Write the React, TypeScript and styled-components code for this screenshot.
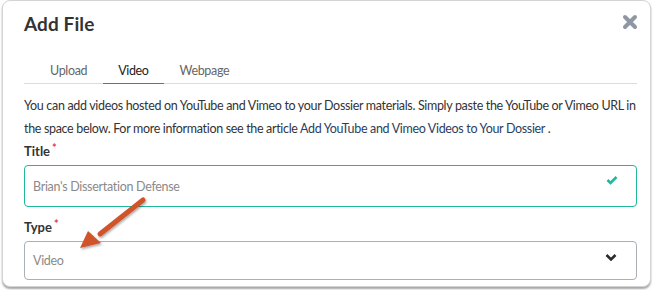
import React from 'react'
import styled, { createGlobalStyle } from 'styled-components'

const GlobalStyle = createGlobalStyle`
  html, body {
    margin: 0;
    padding: 0;
    background: #ffffff;
  }
  body {
    font-family: Lato, 'Open Sans', sans-serif;
    color: #333;
  }
`

const Page = styled.div`
  position: relative;
  width: 653px;
  height: 290px;
  padding: 0 2px 0 2px;
  box-sizing: border-box;
`

const Modal = styled.div`
  box-sizing: border-box;
  width: 649px;
  height: 287px;
  border: 1px solid #d4d4d4;
  border-radius: 8px;
  box-shadow: 0 2px 2px rgba(0, 0, 0, 0.35);
  padding: 0 13px 0 21px;
  background: #fff;
`

const Header = styled.div`
  display: flex;
  justify-content: space-between;
  align-items: flex-start;
  padding-top: 11px;
  height: 62px;
  box-sizing: border-box;
`

const Title = styled.h1`
  margin: 0;
  font-size: 19px;
  font-weight: 700;
  color: #333;
  letter-spacing: 0.1px;
`

const Close = styled.button`
  border: 0;
  background: none;
  padding: 0;
  width: 16px;
  height: 16px;
  display: flex;
  cursor: pointer;
  transform: translate(1px, 2px);
`

const TabList = styled.div`
  display: flex;
  padding-left: 11px;
  border-bottom: 1px solid #dcdcdc;
`

const Tab = styled.div<{ $active?: boolean }>`
  padding: 0 15px 5px;
  font-size: 12.5px;
  letter-spacing: -0.35px;
  color: ${p => (p.$active ? '#222' : '#666')};
  border-bottom: 1px solid ${p => (p.$active ? '#3d7eb0' : 'transparent')};
  margin-bottom: -1px;
  margin-right: 1px;
`

const Intro = styled.p`
  margin: 10px 0 0;
  font-size: 12.5px;
  letter-spacing: -0.33px;
  line-height: 23px;
  color: #333;
`

const Link = styled.a`
  color: #2d3e5c;
  text-decoration: none;
`

const Field = styled.div<{ $gap: number }>`
  margin-top: ${p => p.$gap}px;
`

const Label = styled.label`
  display: block;
  font-size: 13px;
  font-weight: 700;
  color: #333;
  line-height: 20px;
  margin-bottom: 4px;
`

const Required = styled.sup`
  color: #e2374a;
  font-size: 11px;
  margin-left: 2px;
  vertical-align: 4px;
  line-height: 0;
`

const InputBox = styled.div<{ $tone: 'ok' | 'plain'; $h: number }>`
  display: flex;
  align-items: center;
  justify-content: space-between;
  box-sizing: border-box;
  height: ${p => p.$h}px;
  border: 1px solid ${p => (p.$tone === 'ok' ? '#1fb89a' : '#a8b0b8')};
  border-radius: 4px;
  padding: 0 18px 0 8px;
  font-size: 12.5px;
  letter-spacing: -0.3px;
  color: #8a8a8a;
`

const Arrow = styled.svg`
  position: absolute;
  left: 70px;
  top: 190px;
  overflow: visible;
`

const CloseIcon = () => (
  <svg width="16" height="16" viewBox="0 0 16 16">
    <path d="M3 3 L13 13 M13 3 L3 13" stroke="#8e97a2" strokeWidth="4" strokeLinecap="round" />
  </svg>
)

const CheckIcon = () => (
  <svg width="12" height="10" viewBox="0 0 12 10" style={{ marginTop: -12 }}>
    <path d="M1.5 5 L4.5 8 L10.5 2" stroke="#1fb89a" strokeWidth="2.6" fill="none" />
  </svg>
)

const ChevronIcon = () => (
  <svg width="12" height="9" viewBox="0 0 12 9" style={{ marginTop: -6, marginRight: 1 }}>
    <path d="M1.5 2 L6 6.5 L10.5 2" stroke="#2b2b2b" strokeWidth="2.6" fill="none" />
  </svg>
)

const App = () => {
  return (
    <Page>
      <GlobalStyle />
      <Modal>
        <Header>
          <Title>Add File</Title>
          <Close aria-label='Close'>
            <CloseIcon />
          </Close>
        </Header>
        <TabList>
          <Tab>Upload</Tab>
          <Tab $active>Video</Tab>
          <Tab>Webpage</Tab>
        </TabList>
        <Intro>
          You can add videos hosted on YouTube and Vimeo to your Dossier materials. Simply paste the YouTube or Vimeo URL in
          the space below. For more information see the article{' '}
          <Link href='#'>Add YouTube and Vimeo Videos to Your Dossier</Link> .
        </Intro>
        <Field $gap={1}>
          <Label>
            Title<Required>*</Required>
          </Label>
          <InputBox $tone='ok' $h={42}>
            <span>Brian's Dissertation Defense</span>
            <CheckIcon />
          </InputBox>
        </Field>
        <Field $gap={10}>
          <Label>
            Type<Required>*</Required>
          </Label>
          <InputBox $tone='plain' $h={39}>
            <span>Video</span>
            <ChevronIcon />
          </InputBox>
        </Field>
      </Modal>
      <Arrow width="90" height="70">
        <defs>
          <filter id="sh" x="-20%" y="-20%" width="140%" height="140%">
            <feDropShadow dx="1" dy="1.5" stdDeviation="1.2" floodColor="#000" floodOpacity="0.35" />
          </filter>
        </defs>
        <g filter="url(#sh)" fill="#d1532b">
          <path d="M73 10 L30 44" stroke="#d1532b" strokeWidth="5" strokeLinecap="round" />
          <path d="M10 58 L18 41 L31 53 Z" />
        </g>
      </Arrow>
    </Page>
  )
}

export default App
